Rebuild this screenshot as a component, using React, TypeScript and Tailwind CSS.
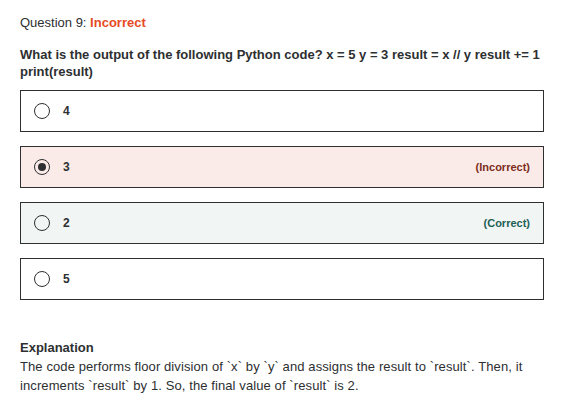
const options = [
  { label: '4', status: 'none' as const },
  { label: '3', status: 'incorrect' as const },
  { label: '2', status: 'correct' as const },
  { label: '5', status: 'none' as const },
];

function Radio({ checked }: { checked: boolean }) {
  return (
    <span className="flex h-4 w-4 shrink-0 items-center justify-center rounded-full border border-[#2d2f31]">
      {checked && <span className="h-2 w-2 rounded-full bg-[#2d2f31]" />}
    </span>
  );
}

export default function App() {
  return (
    <div className="min-h-screen bg-white px-5 pt-[14px] text-[#2d2f31] [font-family:'Liberation_Sans',Arial,sans-serif]">
      <div className="w-[524px]">
        {/* Header */}
        <p className="text-[13px] leading-[18px]">
          Question 9: <span className="font-bold text-[#e64a24]">Incorrect</span>
        </p>
        <p className="mt-[14px] text-[13px] font-bold leading-[17px]">
          What is the output of the following Python code? x = 5 y = 3 result = x // y result += 1 print(result)
        </p>

        {/* Options */}
        <div className="mt-[10px] flex flex-col gap-[14px]">
          {options.map((opt) => (
            <div
              key={opt.label}
              className={`flex h-[42px] items-center border border-[#2d2f31] pl-[13px] pr-[13px] ${
                opt.status === 'incorrect'
                  ? 'bg-[#fbebe8]'
                  : opt.status === 'correct'
                  ? 'bg-[#f1f5f4]'
                  : 'bg-white'
              }`}
            >
              <Radio checked={opt.status === 'incorrect'} />
              <span className="ml-[13px] text-[12px] font-bold">{opt.label}</span>
              {opt.status === 'incorrect' && (
                <span className="ml-auto text-[11px] font-bold text-[#7b2c20]">(Incorrect)</span>
              )}
              {opt.status === 'correct' && (
                <span className="ml-auto text-[11px] font-bold text-[#1e6055]">(Correct)</span>
              )}
            </div>
          ))}
        </div>

        {/* Explanation */}
        <div className="mt-[39px]">
          <p className="text-[13px] font-bold leading-[18px]">Explanation</p>
          <p className="text-[13px] leading-[19px] tracking-[0.1px]">
            The code performs floor division of `x` by `y` and assigns the result to `result`. Then, it increments `result` by 1. So, the final value of `result` is 2.
          </p>
        </div>
      </div>
    </div>
  );
}
